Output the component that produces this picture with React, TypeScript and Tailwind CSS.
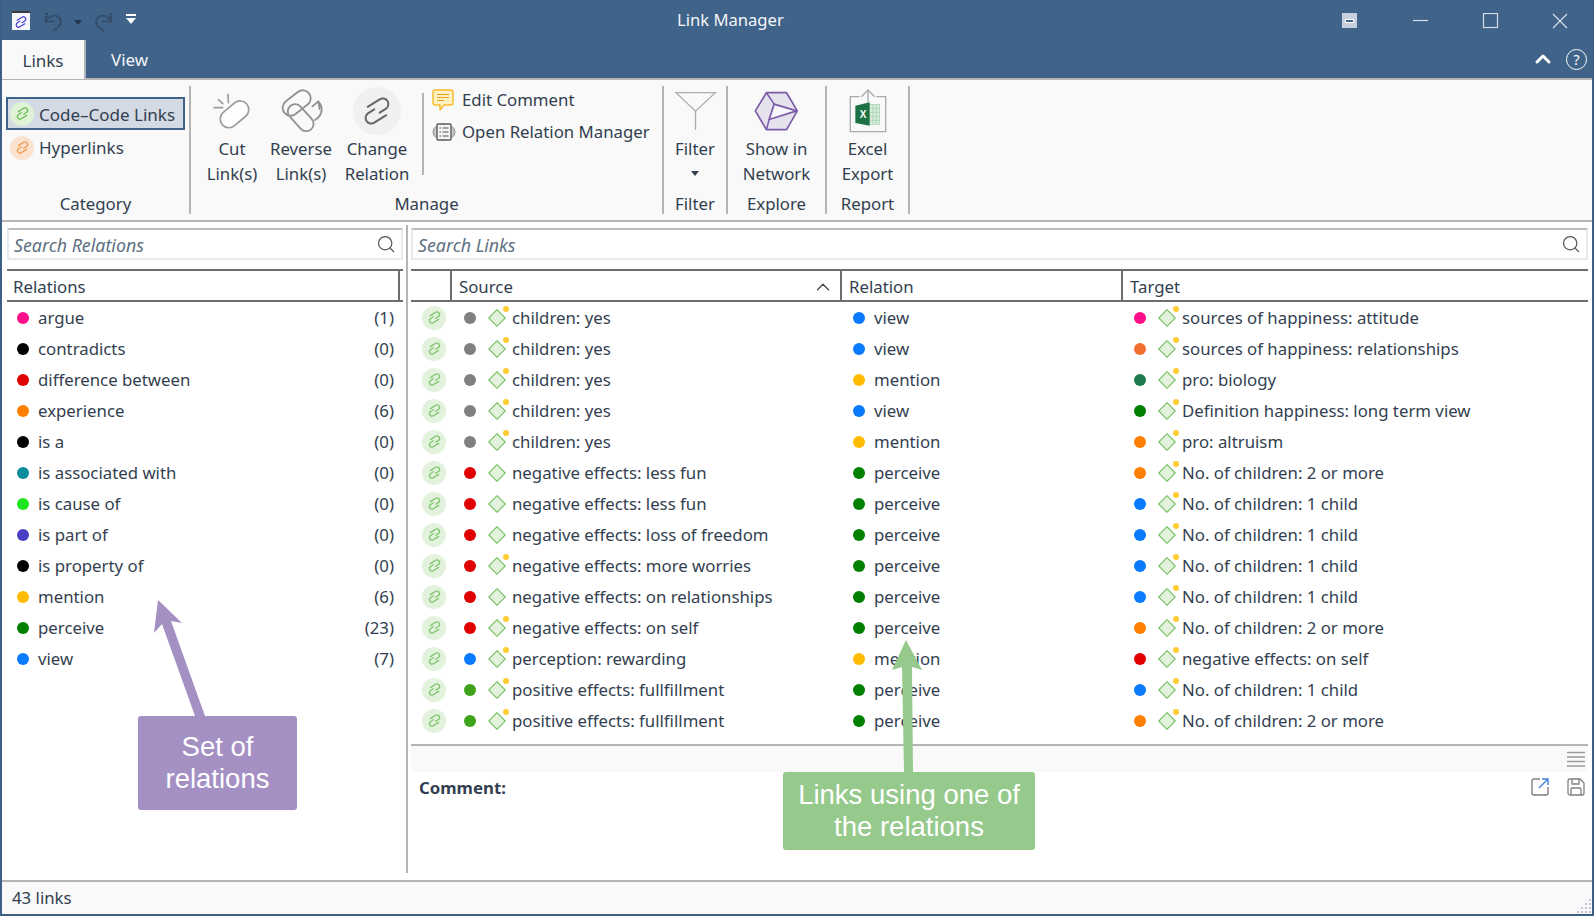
import { Search, ChevronUp } from 'lucide-react'

const relations: [string, string, number][] = [
  ['argue', '#ff0f8a', 1],
  ['contradicts', '#000000', 0],
  ['difference between', '#e00000', 0],
  ['experience', '#ff8000', 6],
  ['is a', '#000000', 0],
  ['is associated with', '#0d8c9c', 0],
  ['is cause of', '#1fe61f', 0],
  ['is part of', '#4a3fc0', 0],
  ['is property of', '#000000', 0],
  ['mention', '#ffbb00', 6],
  ['perceive', '#008000', 23],
  ['view', '#0a7aff', 7],
]

const GRAY = '#808080'
const RED = '#e00000'
const BLUE = '#0a7aff'
const LEAF = '#3ea31a'
const GREEN = '#008000'
const AMBER = '#ffbb00'
const ORANGE = '#ff8000'

type Row = {
  srcColor: string
  src: string
  srcMark: boolean
  relColor: string
  rel: string
  tgtColor: string
  tgt: string
}

const rows: Row[] = [
  { srcColor: GRAY, src: 'children: yes', srcMark: true, relColor: BLUE, rel: 'view', tgtColor: '#ff0f8a', tgt: 'sources of happiness: attitude' },
  { srcColor: GRAY, src: 'children: yes', srcMark: true, relColor: BLUE, rel: 'view', tgtColor: '#f27030', tgt: 'sources of happiness: relationships' },
  { srcColor: GRAY, src: 'children: yes', srcMark: true, relColor: AMBER, rel: 'mention', tgtColor: '#1f7a4d', tgt: 'pro: biology' },
  { srcColor: GRAY, src: 'children: yes', srcMark: true, relColor: BLUE, rel: 'view', tgtColor: GREEN, tgt: 'Definition happiness: long term view' },
  { srcColor: GRAY, src: 'children: yes', srcMark: true, relColor: AMBER, rel: 'mention', tgtColor: ORANGE, tgt: 'pro: altruism' },
  { srcColor: RED, src: 'negative effects: less fun', srcMark: false, relColor: GREEN, rel: 'perceive', tgtColor: ORANGE, tgt: 'No. of children: 2 or more' },
  { srcColor: RED, src: 'negative effects: less fun', srcMark: false, relColor: GREEN, rel: 'perceive', tgtColor: BLUE, tgt: 'No. of children: 1 child' },
  { srcColor: RED, src: 'negative effects: loss of freedom', srcMark: false, relColor: GREEN, rel: 'perceive', tgtColor: BLUE, tgt: 'No. of children: 1 child' },
  { srcColor: RED, src: 'negative effects: more worries', srcMark: true, relColor: GREEN, rel: 'perceive', tgtColor: BLUE, tgt: 'No. of children: 1 child' },
  { srcColor: RED, src: 'negative effects: on relationships', srcMark: false, relColor: GREEN, rel: 'perceive', tgtColor: BLUE, tgt: 'No. of children: 1 child' },
  { srcColor: RED, src: 'negative effects: on self', srcMark: true, relColor: GREEN, rel: 'perceive', tgtColor: ORANGE, tgt: 'No. of children: 2 or more' },
  { srcColor: BLUE, src: 'perception: rewarding', srcMark: true, relColor: AMBER, rel: 'mention', tgtColor: RED, tgt: 'negative effects: on self' },
  { srcColor: LEAF, src: 'positive effects: fullfillment', srcMark: true, relColor: GREEN, rel: 'perceive', tgtColor: BLUE, tgt: 'No. of children: 1 child' },
  { srcColor: LEAF, src: 'positive effects: fullfillment', srcMark: true, relColor: GREEN, rel: 'perceive', tgtColor: ORANGE, tgt: 'No. of children: 2 or more' },
]

// two interlocked hooks along the diagonal, the app's link glyph
function Chain({ size, stroke, width = 2 }: { size: number; stroke: string; width?: number }) {
  return (
    <svg width={size} height={size} viewBox="-12 -12 24 24" fill="none" stroke={stroke} strokeWidth={width} strokeLinecap="round" className="shrink-0">
      <g transform="rotate(-32)">
        <path d="M-4 -6H6a4 4 0 0 1 0 8H1" />
        <path d="M4 6H-6a4 4 0 0 1 0-8H-1" />
      </g>
    </svg>
  )
}

function Dot({ color }: { color: string }) {
  return <span className="w-[12px] h-[12px] rounded-full shrink-0" style={{ backgroundColor: color }} />
}

// green diamond code symbol, optional yellow memo dot at the top right
function Diamond({ mark = true }: { mark?: boolean }) {
  return (
    <span className="relative w-[18px] h-[18px] shrink-0">
      <svg width="18" height="18" viewBox="0 0 18 18">
        <polygon points="9,0.7 17.3,9 9,17.3 0.7,9" fill="#e3f2dc" stroke="#70bf5c" strokeWidth="1.1" />
      </svg>
      {mark && <span className="absolute -top-[3px] -right-[3px] w-[6px] h-[6px] rounded-full bg-[#ffcc33]" />}
    </span>
  )
}

function LinkBadge({ bg, stroke }: { bg: string; stroke: string }) {
  return (
    <span className={`w-[24px] h-[24px] rounded-full flex items-center justify-center shrink-0 ${bg}`}>
      <Chain size={15} stroke={stroke} width={2} />
    </span>
  )
}

function SearchBox({ placeholder }: { placeholder: string }) {
  return (
    <div className="h-[32px] border-2 border-[#e6eaef] border-t-[#b9bdc2] bg-white flex items-center pl-[5px] pr-[5px]">
      <span className="italic text-[#5e7183] text-[17.8px] pt-[2px]">{placeholder}</span>
      <Search size={20} strokeWidth={1.5} className="ml-auto text-[#555]" />
    </div>
  )
}

function BigButton({ width, icon, lines }: { width: string; icon: React.ReactNode; lines: string[] }) {
  return (
    <div className={`flex flex-col items-center shrink-0 ${width}`}>
      <div className="h-[50px] flex items-center justify-center">{icon}</div>
      {lines.map((l) => (
        <span key={l} className="leading-[25px] whitespace-nowrap">{l}</span>
      ))}
    </div>
  )
}

function GroupLabel({ children }: { children: React.ReactNode }) {
  return <div className="h-[26px] pt-[6px] leading-[20px] text-center">{children}</div>
}

function CutIcon() {
  return (
    <svg width="42" height="40" viewBox="20 20 125 120" fill="none" stroke="#9c9c9c" strokeWidth="5" strokeLinecap="round">
      <rect x="42" y="64" width="96" height="52" rx="26" transform="rotate(-40 90 90)" fill="#fff" />
      <path d="M29 70h25M70 30l2 25M42 46l13 12" />
    </svg>
  )
}

function ReverseIcon() {
  return (
    <svg width="45" height="45" viewBox="220 8 135 135" fill="none" stroke="#929292" strokeWidth="5.5" strokeLinecap="round" strokeLinejoin="round">
      <rect x="238" y="72" width="94" height="44" rx="22" transform="rotate(48 285 94)" />
      <rect x="226" y="26" width="94" height="48" rx="24" transform="rotate(-38 273 50)" />
      <path d="M320 60l18-15 4 23" />
      <path d="M338 47c12 10 14 30 2 44-3 4-6 7-12 10" />
    </svg>
  )
}

function CommentIcon() {
  return (
    <svg width="22" height="22" viewBox="0 0 22 22" fill="#fff2c2" stroke="#f7b92b" strokeWidth="1.4" strokeLinejoin="round">
      <path d="M3 1h16a2 2 0 0 1 2 2v11a2 2 0 0 1-2 2h-7l-4 5v-5H3a2 2 0 0 1-2-2V3a2 2 0 0 1 2-2z" />
      <path d="M5 5.5h12M5 8.5h12M5 11.5h7" stroke="#e8a020" strokeWidth="1" fill="none" />
    </svg>
  )
}

function ManagerIcon() {
  return (
    <svg width="24" height="20" viewBox="0 0 24 20" fill="none">
      <ellipse cx="12" cy="10" rx="11" ry="8" fill="#c8c8c8" stroke="#8a8a8a" />
      <rect x="5" y="2" width="14" height="16" rx="1" fill="#f3f3f3" stroke="#5f5f5f" strokeWidth="1.4" />
      <path d="M7.5 6h1.5M10.5 6h6M7.5 10h1.5M10.5 10h6M7.5 14h1.5M10.5 14h6" stroke="#555" />
    </svg>
  )
}

function HexIcon() {
  return (
    <svg width="47" height="42" viewBox="255 30 140 125" fill="none" stroke="#7a5ca8" strokeWidth="5" strokeLinejoin="round">
      <polygon points="295,38 355,38 387,92 355,148 295,148 262,92" fill="#e5e2ee" />
      <polygon points="318,72 385,92 303,118" fill="#f7f6fa" />
      <path d="M303 118l-8 30M318 72l-23-34" strokeWidth="4.5" />
    </svg>
  )
}

function ExcelIcon() {
  return (
    <svg width="40" height="46" viewBox="535 20 120 136" fill="none">
      <path d="M570 45h-28v105h106V45h-28" stroke="#a8acb0" strokeWidth="4" />
      <path d="M595 62V26M575 45l20-20 20 20" stroke="#a8acb0" strokeWidth="4" />
      <rect x="600" y="68" width="30" height="60" fill="#d8ecdc" stroke="#a5d2b0" strokeWidth="2" />
      <path d="M610 68v60M620 68v60M600 80h30M600 92h30M600 104h30M600 116h30" stroke="#8fc8a0" strokeWidth="1.5" />
      <polygon points="557,72 600,62 600,132 557,124" fill="#1e7145" />
      <text x="570" y="108" fill="#fff" fontSize="30" fontWeight="700" fontFamily="Liberation Sans, sans-serif">X</text>
    </svg>
  )
}

function ArrowIcon({ flip = false }: { flip?: boolean }) {
  return (
    <svg width="22" height="22" viewBox="0 0 20 21" fill="none" stroke="#33475e" strokeWidth="2" strokeDasharray="2.2 0.8" className={flip ? '-scale-x-100' : ''}>
      <path d="M2 11l1-9M2 11l9 0M2 11c4-7 12-7 14-2 2 4-2 8-7 11" />
    </svg>
  )
}

const headCell = 'border-r-2 border-[#6e6e6e] h-full flex items-center pt-[3px]'

export default function App() {
  return (
    <div className="relative w-[1594px] h-[916px] box-border border-2 border-t-[1px] border-[#3c5f85] bg-white flex flex-col overflow-hidden text-[#333f50] text-[16.8px] font-['Noto_Sans',sans-serif]">
      {/* Title bar */}
      <div className="h-[39px] bg-[#40638a] flex items-center text-white shrink-0">
        <span className="ml-[10px] w-[18px] h-[19px] bg-[#f4f6fa] border-t-2 border-[#3a3a3a] flex items-center justify-center">
          <Chain size={14} stroke="#4a3fd0" width={2} />
        </span>
        <span className="ml-[13px]"><ArrowIcon /></span>
        <span className="ml-[9px] mt-[3px] w-0 h-0 border-x-[4px] border-x-transparent border-t-[5px] border-t-[#26384f]" />
        <span className="ml-[10px]"><ArrowIcon flip /></span>
        <span className="ml-[12px] mb-[3px] flex flex-col items-center gap-[2px]">
          <span className="w-[10px] h-[2px] bg-white" />
          <span className="w-0 h-0 border-x-[5px] border-x-transparent border-t-[6px] border-t-white" />
        </span>
        <span className="ml-[541px] text-[16.6px] text-[#f2f5f8]">Link Manager</span>
        <span className="ml-auto mr-[235px] w-[15px] h-[15px] bg-[#c6d1dd] flex items-center justify-center">
          <span className="w-[9px] h-[4px] bg-[#40638a] border border-white" />
        </span>
      </div>
      <div className="absolute top-[12px] right-[24px] flex items-center text-[#d5dde6]">
        <svg width="155" height="16" viewBox="0 0 155 16" fill="none" stroke="currentColor" strokeWidth="1.2">
          <path d="M0 7.5h15" />
          <rect x="70.5" y="0.5" width="14" height="14" />
          <path d="M140 1l14 14M154 1l-14 14" />
        </svg>
      </div>

      {/* Tabs */}
      <div className="h-[38px] bg-[#40638a] flex shrink-0 items-stretch relative z-10">
        <div className="w-[84px] h-[39px] bg-[#f9f9f9] border-r-2 border-[#b0b4b8] flex items-center justify-center pt-[2px] text-[17px]">Links</div>
        <div className="ml-[25px] flex items-center pt-[2px] text-[17px] text-[#f2f5f8]">View</div>
        <div className="ml-auto flex items-center gap-[11px] pr-[5px]">
          <ChevronUp size={24} strokeWidth={3} className="text-white" />
          <span className="w-[21px] h-[21px] rounded-full border-[1.5px] border-white text-white text-[14px] flex items-center justify-center">?</span>
        </div>
      </div>

      {/* Ribbon */}
      <div className="h-[144px] bg-[#f9f9f9] border-y-2 border-[#b5b5b5] flex items-stretch py-[6px] shrink-0">
        <div className="w-[189px] border-r-2 border-[#b5b5b5] flex flex-col shrink-0">
          <div className="flex-1 pl-[4px] pt-[11px]">
            <div className="w-[179px] h-[33px] border-2 border-[#3f6389] bg-[#d3dae3] flex items-center pl-[2px]">
              <LinkBadge bg="bg-[#dff2d6]" stroke="#6cb957" />
              <span className="ml-[5px] pt-[2px] whitespace-nowrap text-[17px]">Code–Code Links</span>
            </div>
            <div className="h-[33px] flex items-center pl-[4px] mt-[1px]">
              <LinkBadge bg="bg-[#fbe3d0]" stroke="#ee9a4d" />
              <span className="ml-[5px] text-[17px]">Hyperlinks</span>
            </div>
          </div>
          <GroupLabel>Category</GroupLabel>
        </div>

        <div className="w-[473px] border-r-2 border-[#b5b5b5] flex flex-col shrink-0">
          <div className="flex-1 flex pl-[6px]">
            <BigButton width="w-[70px]" icon={<CutIcon />} lines={['Cut', 'Link(s)']} />
            <BigButton width="w-[68px]" icon={<ReverseIcon />} lines={['Reverse', 'Link(s)']} />
            <BigButton
              width="w-[84px]"
              icon={
                <span className="w-[48px] h-[48px] rounded-full bg-[#f0f0f0] flex items-center justify-center">
                  <Chain size={34} stroke="#666666" width={1.4} />
                </span>
              }
              lines={['Change', 'Relation']}
            />
            <div className="ml-[3px] mt-[7px] w-[2px] h-[82px] bg-[#b5b5b5]" />
            <div className="ml-[8px] flex flex-col">
              <div className="h-[30px] mt-[-1px] flex items-center gap-[8px]">
                <CommentIcon />
                <span>Edit Comment</span>
              </div>
              <div className="h-[33px] flex items-center gap-[6px]">
                <ManagerIcon />
                <span className="whitespace-nowrap">Open Relation Manager</span>
              </div>
            </div>
          </div>
          <GroupLabel>Manage</GroupLabel>
        </div>

        <div className="w-[64px] border-r-2 border-[#b5b5b5] flex flex-col shrink-0">
          <div className="flex-1 flex flex-col items-center">
            <div className="h-[50px] flex items-center justify-center">
              <svg width="43" height="42" viewBox="10 35 130 125" fill="none" stroke="#adadad" strokeWidth="4">
                <path d="M16 42h119L75 98zM75 98v57" />
              </svg>
            </div>
            <span className="leading-[25px]">Filter</span>
            <span className="mt-[10px] w-0 h-0 border-x-[4px] border-x-transparent border-t-[5px] border-t-[#333f50]" />
          </div>
          <GroupLabel>Filter</GroupLabel>
        </div>

        <div className="w-[99px] border-r-2 border-[#b5b5b5] flex flex-col shrink-0">
          <div className="flex-1 flex justify-center">
            <BigButton width="w-[99px]" icon={<HexIcon />} lines={['Show in', 'Network']} />
          </div>
          <GroupLabel>Explore</GroupLabel>
        </div>

        <div className="w-[83px] border-r-2 border-[#b5b5b5] flex flex-col shrink-0">
          <div className="flex-1 flex justify-center">
            <BigButton width="w-[83px]" icon={<ExcelIcon />} lines={['Excel', 'Export']} />
          </div>
          <GroupLabel>Report</GroupLabel>
        </div>
      </div>

      {/* Body */}
      <div className="flex-1 flex min-h-0 pb-[7px]">
        {/* Relations */}
        <div className="w-[404px] shrink-0 pl-[5px] pr-[3px] pt-[6px]">
          <SearchBox placeholder="Search Relations" />
          <div className="mt-[9px] h-[33px] border-y-2 border-[#6e6e6e] flex items-center">
            <div className={`${headCell} w-[393px] pl-[6px]`}>Relations</div>
          </div>
          {relations.map(([name, color, count]) => (
            <div key={name} className="h-[31px] flex items-center pl-[10px] pr-[9px]">
              <Dot color={color} />
              <span className="ml-[9px]">{name}</span>
              <span className="ml-auto">({count})</span>
            </div>
          ))}
        </div>
        <div className="w-[2px] bg-[#b5b5b5] mt-[3px] shrink-0" />

        {/* Links */}
        <div className="flex-1 min-w-0 flex flex-col pt-[6px] pl-[3px] pr-[4px]">
          <SearchBox placeholder="Search Links" />
          <div className="mt-[9px] h-[33px] border-y-2 border-[#6e6e6e] grid grid-cols-[41px_390px_281px_1fr] items-center">
            <div className={headCell} />
            <div className={`${headCell} pl-[7px] justify-between pr-[6px]`}>
              Source
              <ChevronUp size={22} strokeWidth={1.4} className="text-[#444]" />
            </div>
            <div className={`${headCell} pl-[7px]`}>Relation</div>
            <div className="pl-[7px] pt-[3px]">Target</div>
          </div>
          {rows.map((r, i) => (
            <div key={i} className="h-[31px] grid grid-cols-[41px_390px_281px_1fr] items-center whitespace-nowrap">
              <div className="pl-[11px] flex items-center">
                <LinkBadge bg="bg-[#e2f2dc]" stroke="#7cc46a" />
              </div>
              <div className="pl-[12px] flex items-center">
                <Dot color={r.srcColor} />
                <span className="ml-[12px] flex"><Diamond mark={r.srcMark} /></span>
                <span className="ml-[6px]">{r.src}</span>
              </div>
              <div className="pl-[11px] flex items-center">
                <Dot color={r.relColor} />
                <span className="ml-[9px]">{r.rel}</span>
              </div>
              <div className="pl-[11px] flex items-center">
                <Dot color={r.tgtColor} />
                <span className="ml-[12px] flex"><Diamond /></span>
                <span className="ml-[6px]">{r.tgt}</span>
              </div>
            </div>
          ))}
          <div className="mt-[8px] border-t-2 border-[#b5b5b5] h-[28px] bg-[#f9f9f9] flex items-center justify-end pr-[3px] shrink-0">
            <svg width="18" height="16" viewBox="0 0 18 16" stroke="#9a9a9a" strokeWidth="1.6">
              <path d="M0 1.5h18M0 6h18M0 10.5h18M0 15h18" />
            </svg>
          </div>
          <div className="flex items-start pt-[3px]">
            <span className="font-bold text-[16.8px] ml-[8px]">Comment:</span>
            <div className="ml-auto flex items-center gap-[18px] pr-[3px] pt-[3px]">
              <svg width="18" height="18" viewBox="0 0 18 18" fill="none" strokeWidth="1.4">
                <path d="M9 1H3a2 2 0 0 0-2 2v12a2 2 0 0 0 2 2h12a2 2 0 0 0 2-2V9" stroke="#808080" />
                <path d="M8 10l9-9M11 1h6v6" stroke="#3f82d8" />
              </svg>
              <svg width="18" height="18" viewBox="0 0 18 18" fill="none" stroke="#808080" strokeWidth="1.3">
                <path d="M3 1h10l4 4v10a2 2 0 0 1-2 2H3a2 2 0 0 1-2-2V3a2 2 0 0 1 2-2z" />
                <path d="M5 1v5h7V1M4 17v-6a1 1 0 0 1 1-1h8a1 1 0 0 1 1 1v6" />
              </svg>
            </div>
          </div>
        </div>
      </div>

      {/* Status bar */}
      <div className="h-[34px] shrink-0 border-t-2 border-[#b5b5b5] bg-[#f9f9f9] flex items-center pl-[10px] relative">
        43 links
        <svg width="16" height="16" viewBox="0 0 16 16" fill="#aeb6cc" className="absolute right-0 bottom-0">
          <circle cx="14" cy="2" r="1" /><circle cx="14" cy="6" r="1" /><circle cx="14" cy="10" r="1" /><circle cx="14" cy="14" r="1" />
          <circle cx="10" cy="6" r="1" /><circle cx="10" cy="10" r="1" /><circle cx="10" cy="14" r="1" />
          <circle cx="6" cy="10" r="1" /><circle cx="6" cy="14" r="1" /><circle cx="2" cy="14" r="1" />
        </svg>
      </div>

      {/* Annotations drawn on top of the screenshot */}
      <svg width="1594" height="916" className="absolute -left-[2px] -top-[1px] pointer-events-none z-20">
        <polygon points="158,600 182,623 171,621 205,716 195,716 162,624 154,633" fill="#a590c4" />
        <polygon points="906,640 922,670 912,667 913,772 904,772 902,667 892,670" fill="#95ca8c" />
      </svg>
      <div className="absolute left-[136px] top-[715px] w-[159px] h-[94px] rounded-[3px] bg-[#a590c4] text-white text-[27.5px] leading-[32px] font-['Liberation_Sans',sans-serif] flex items-center justify-center text-center z-20">
        Set of<br />relations
      </div>
      <div className="absolute left-[781px] top-[771px] w-[252px] h-[78px] rounded-[3px] bg-[#95ca8c] text-white text-[27.5px] leading-[32px] font-['Liberation_Sans',sans-serif] flex items-center justify-center text-center z-20">
        Links using one of<br />the relations
      </div>
    </div>
  )
}
